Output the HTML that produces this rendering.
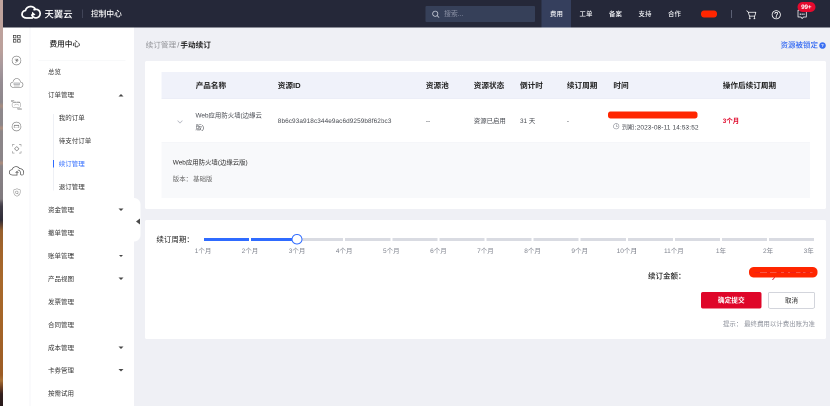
<!DOCTYPE html>
<html lang="zh-CN">
<head>
<meta charset="utf-8">
<title>续订管理 - 手动续订</title>
<style>
html,body{margin:0;padding:0;}
body{width:830px;height:406px;overflow:hidden;background:#eff0f5;font-family:"Liberation Sans","Noto Sans CJK SC",sans-serif;}
#root{position:absolute;left:0;top:0;width:1660px;height:812px;transform:scale(.5);transform-origin:0 0;will-change:transform;overflow:hidden;background:#eff0f5;color:#333;}
#root *{box-sizing:border-box;}
.abs{position:absolute;white-space:nowrap;}
/* desktop strip at far left */
#strip{left:0;top:0;width:5.7px;height:812px;background:linear-gradient(180deg,#c0a49d 0px,#bba09b 100px,#a6989c 135px,#958c92 165px,#8d878b 205px,#a88d80 212px,#8d878b 219px,#8c8689 250px,#b08f7e 256px,#8c8689 262px,#8a8488 320px,#ad8c7c 326px,#898387 332px,#807a7e 398px,#55505a 406px,#403c46 413px,#2f2c37 440px,#5f4232 450px,#96602e 461px,#a2642a 500px,#a8692b 560px,#a56528 640px,#9c5c25 750px,#a86f33 760px,#6e4022 775px,#33201f 788px,#271819 812px);}
/* header */
#hdr{left:7px;top:0;width:1653px;height:55px;background:#252839;z-index:5;}
#hdr .t{color:#fff;}
.tab{position:absolute;top:0;height:55px;line-height:56px;width:59px;text-align:center;color:#f4f5f8;font-size:12.8px;font-weight:500;}
.tab.on{background:#353f5d;}
/* icon bar */
#ibar{left:7px;top:53px;width:54px;height:759px;background:#fff;border-right:2px solid #f4f5f8;}
/* menu */
#menu{left:61px;top:53px;width:207px;height:759px;background:#fff;}
.mi{position:absolute;left:35px;height:30px;line-height:30px;font-size:13px;color:#333;white-space:nowrap;}
.mi.sub{left:56.4px;}
.mi.act{color:#2f6bff;}
.car{position:absolute;left:176.4px;margin-top:-1.2px;width:0;height:0;border-left:5.6px solid transparent;border-right:5.6px solid transparent;border-top:5px solid #474747;}
.car.up{border-top:none;border-bottom:5px solid #474747;}
/* cards */
.card{position:absolute;background:#fff;border-radius:3.5px;}
.th{position:absolute;top:0;height:54px;line-height:54px;font-size:15.25px;font-weight:700;color:#222;white-space:nowrap;}
.td{position:absolute;font-size:12.8px;color:#45484f;white-space:nowrap;line-height:24px;}
.lab{position:absolute;top:0;font-size:13px;color:#7e828d;white-space:nowrap;line-height:20px;transform:translateX(-50%);}
.sep{position:absolute;top:0;width:4px;height:6px;background:#fff;margin-left:-2px;}
</style>
</head>
<body>
<div id="root">

<div id="strip" class="abs"></div>
<div class="abs" style="left:5.700px;top:0;width:2px;height:55px;background:#252839"></div>
<div class="abs" style="left:5.700px;top:55px;width:2px;height:757px;background:#fff"></div>

<!-- ================= HEADER ================= -->
<div id="hdr" class="abs">
  <svg class="abs" style="left:0;top:0" width="100" height="53" viewBox="0 0 100 53" fill="none" stroke="#fff" stroke-width="3.5" stroke-linecap="round" stroke-linejoin="round">
    <path d="M57.5 36H46C41 36 37 32.800 37 28.500c0-4 3-7.200 7-7.500C45 16.200 49.300 13 54.200 13c4.300 0 7.800 2.200 9.600 5.600"/>
    <path d="M61.2 19.4A8.6 8.6 0 1 1 56.7 30.1" stroke-width="3.4"/>
    <path d="M57.800 24.500l-.8 6.400 6-1.600z" fill="#fff" stroke-width="1.2"/>
  </svg>
  <div class="abs t" style="left:82px;top:14.700px;line-height:28px;font-size:18.600px;font-weight:500;letter-spacing:.1px">天翼云</div>
  <div class="abs" style="left:157px;top:19px;width:1.4px;height:17px;background:#5b6074"></div>
  <div class="abs t" style="left:175px;top:14px;line-height:28px;font-size:15.4px;font-weight:500">控制中心</div>

  <div class="abs" style="left:843.6px;top:12px;width:219.4px;height:32px;border-radius:2px;background:#364059"></div>
  <svg class="abs" style="left:856px;top:20px" width="17" height="17" viewBox="0 0 17 17" fill="none" stroke="#c9cdd9" stroke-width="1.600" stroke-linecap="round"><circle cx="7.500" cy="7.500" r="5.200"/><path d="M11.500 11.500l3.300 3.300"/></svg>
  <div class="abs" style="left:881px;top:14px;line-height:28px;font-size:13.8px;color:#8d93a7">搜索...</div>

  <div class="tab on" style="left:1076.4px">费用</div>
  <div class="tab" style="left:1135.400px">工单</div>
  <div class="tab" style="left:1194.400px">备案</div>
  <div class="tab" style="left:1253.400px">支持</div>
  <div class="tab" style="left:1312.400px">合作</div>

  <div class="abs" style="left:1395.400px;top:21px;width:32px;height:14.400px;border-radius:6px;background:#ff2600"></div>
  <div class="abs" style="left:1455.400px;top:19.500px;width:1.400px;height:16px;background:#5b6074"></div>

  <!-- cart -->
  <svg class="abs" style="left:1485px;top:19px" width="22" height="20" viewBox="0 0 22 20" fill="none" stroke="#fff" stroke-width="1.450" stroke-linecap="round" stroke-linejoin="round">
    <path d="M1.500 2.500l3.200 3h15l-2.200 7.800H6.800L4.700 5.500"/><path d="M7.600 13.300v4.500M16.800 13.300v4.500M6.400 18.400h2.400M15.600 18.400h2.400"/>
  </svg>
  <!-- help -->
  <svg class="abs" style="left:1535.400px;top:18.700px" width="21" height="21" viewBox="0 0 21 21" fill="none" stroke="#fff" stroke-width="1.600" stroke-linecap="round" stroke-linejoin="round">
    <circle cx="10.500" cy="10.500" r="8.300"/><path d="M7.800 8.300c0-1.600 1.200-2.700 2.800-2.700s2.700 1 2.700 2.500c0 2-2.600 2.100-2.600 4.200"/><circle cx="10.600" cy="15" r=".6" fill="#fff"/>
  </svg>
  <!-- message -->
  <svg class="abs" style="left:1587px;top:19px" width="22" height="21" viewBox="0 0 22 21" fill="none" stroke="#fff" stroke-width="1.500" stroke-linejoin="round">
    <path d="M2 1.500h16.600v13.400h-5.600l-2.700 3.200-2.700-3.200H2z"/><circle cx="6.600" cy="9.300" r=".6" fill="#fff"/><circle cx="10.300" cy="9.300" r=".6" fill="#fff"/><circle cx="14" cy="9.300" r=".6" fill="#fff"/>
  </svg>
  <div class="abs" style="left:1587.600px;top:4.200px;width:36px;height:19.800px;border-radius:9.900px;background:#e60a2e;color:#fff;font-size:12.600px;font-weight:700;line-height:21.800px;text-align:center;letter-spacing:-.2px">99+</div>
</div>

<!-- ================= ICON BAR ================= -->
<div id="ibar" class="abs">
  <!-- local: x = C-7, y = C-53 -->
  <svg class="abs" style="left:19px;top:17px" width="16" height="16" viewBox="0 0 16 16" fill="none" stroke="#333" stroke-width="1.400"><rect x=".7" y=".7" width="5.200" height="5.200"/><rect x="9.100" y=".7" width="5.200" height="5.200"/><rect x=".7" y="9.100" width="5.200" height="5.200"/><rect x="9.100" y="9.100" width="5.200" height="5.200"/></svg>
  <svg class="abs" style="left:16px;top:58.400px" width="20" height="20" viewBox="0 0 20 20" fill="none" stroke="#6b6b6b" stroke-width="1.100" stroke-linecap="round" stroke-linejoin="round"><circle cx="10" cy="10" r="8.900"/><path d="M6.800 7.200h6.200l-4.600 3.200h5l-5.400 3.600"/></svg>
  <svg class="abs" style="left:12.600px;top:102.600px" width="27" height="20" viewBox="0 0 27 20" fill="none" stroke="#6b6b6b" stroke-width="1.100" stroke-linejoin="round"><path d="M7 19C3.500 19 1 16.600 1 13.600c0-2.700 2-4.900 4.800-5.300C6.500 4.200 9.600 1 13.500 1s7 3.200 7.700 7.300c2.800.4 4.800 2.600 4.800 5.300 0 3-2.500 5.400-6 5.400z"/><rect x="7.800" y="9.800" width="11.400" height="3.600" fill="#d4d6db" stroke="#9a9a9a" stroke-width=".9"/><path d="M7.800 16h11.400" stroke="#888"/></svg>
  <svg class="abs" style="left:13px;top:145px" width="28" height="24" viewBox="0 0 28 24" fill="none" stroke="#9a9a9a" stroke-width="1.100" stroke-linecap="round" stroke-linejoin="round"><rect x="4.200" y="6.400" width="17" height="10.600" rx="4"/><path d="M7.500 6.400h4M14 6.400h5.500" stroke="#555" stroke-width="1.350"/><path d="M9 12.500c2-3 6.500-3 8.500 0" stroke="#aaa"/><path d="M2.400 2.600h5.600M2.400 4.800h4" stroke="#777" stroke-width="1"/><path d="M14.400 19h8.600M15.400 21.200h8" stroke="#888" stroke-width="1"/></svg>
  <svg class="abs" style="left:16px;top:189.800px" width="20" height="20" viewBox="0 0 20 20" fill="none" stroke="#6b6b6b" stroke-width="1.100"><circle cx="10" cy="10" r="8.900"/><rect x="5.300" y="7.500" width="9.400" height="4.800" rx=".6" stroke-width="1"/><path d="M5.300 7.600h9.400" stroke-width="1.500"/></svg>
  <svg class="abs" style="left:16.600px;top:235px" width="19" height="19" viewBox="0 0 21 21" fill="none" stroke="#777" stroke-width="1.200" stroke-linecap="round" stroke-linejoin="round"><path d="M1 5V1h4M16 1h4v4M20 16v4h-4M5 20H1v-4" stroke="#8a8a8a"/><path d="M10.500 5.600l4.900 4.900-4.900 4.900-4.900-4.900z"/></svg>
  <svg class="abs" style="left:10px;top:279px" width="33" height="20" viewBox="0 0 33 22" preserveAspectRatio="none" fill="none" stroke="#333" stroke-width="1.250" stroke-linecap="round" stroke-linejoin="round"><path d="M17 20H8.500C4.500 20 1.500 17.300 1.500 14c0-3 2.300-5.300 5.300-5.700C8 4.500 11 1.500 15 1.500c3.300 0 6 1.800 7.300 4.500"/><path d="M22.500 6c4.500-.5 8 3.500 8 8.500 0 3-1.500 5.500-3.500 5.500s-3.300-2.500-3.300-5.500S22 8.500 19 9"/><path d="M17 20v-7.500M14.500 14.500l2.500-2.500 2.500 2.500"/></svg>
  <svg class="abs" style="left:19px;top:322.600px" width="16" height="18" viewBox="0 0 20 22" fill="none" stroke="#8c8c8c" stroke-width="1.300" stroke-linejoin="round"><path d="M10 1.500l8 3v6c0 5-3.500 8.500-8 10-4.500-1.500-8-5-8-10v-6z"/><circle cx="9.500" cy="10.500" r="3.200"/><path d="M11.500 13l2 3"/></svg>
</div>

<!-- ================= MENU ================= -->
<div id="menu" class="abs">
  <!-- local: x = C-59.6, y = C-53 -->
  <div class="abs" style="left:38px;top:19.800px;line-height:30px;font-size:15.300px;font-weight:500;color:#1a1a1a">费用中心</div>
  <div class="abs" style="left:16px;top:66.500px;width:174px;height:1.500px;background:#f1f2f5"></div>

  <div class="mi" style="top:76.00px">总览</div>
  <div class="mi" style="top:121.96px">订单管理</div><i class="car up" style="top:136.60px"></i>
  <div class="mi sub" style="top:167.92px">我的订单</div>
  <div class="mi sub" style="top:213.88px">待支付订单</div>
  <div class="mi sub act" style="top:259.84px">续订管理</div>
  <div class="mi sub" style="top:305.80px">退订管理</div>
  <div class="mi" style="top:351.76px">资金管理</div><i class="car" style="top:364.96px"></i>
  <div class="mi" style="top:397.72px">撤单管理</div>
  <div class="mi" style="top:443.68px">账单管理</div><i class="car" style="top:456.88px"></i>
  <div class="mi" style="top:489.64px">产品视图</div><i class="car" style="top:502.84px"></i>
  <div class="mi" style="top:535.60px">发票管理</div>
  <div class="mi" style="top:581.56px">合同管理</div>
  <div class="mi" style="top:627.52px">成本管理</div><i class="car" style="top:640.72px"></i>
  <div class="mi" style="top:673.48px">卡券管理</div><i class="car" style="top:686.68px"></i>
  <div class="mi" style="top:719.44px">按需试用</div>

  <div class="abs" style="left:46px;top:175px;width:1.300px;height:153px;background:#dde0ea"></div>
  <div class="abs" style="left:44.800px;top:267.200px;width:2.400px;height:14.500px;background:#2f6bff"></div>
</div>

<!-- collapse tab -->
<div class="abs" style="left:267.600px;top:396px;width:13.800px;height:87.400px;background:#fff;border-radius:0 13px 13px 0"></div>
<div class="abs" style="left:272.400px;top:436.500px;width:0;height:0;border-top:6.500px solid transparent;border-bottom:6.500px solid transparent;border-right:8px solid #4a4a4a"></div>

<!-- ================= BREADCRUMB ================= -->
<div class="abs" style="left:291.200px;top:76.400px;line-height:28px;font-size:15.250px;color:#929398">续订管理<span style="margin:0 2px 0 2.400px;color:#7d7e83">/</span><b style="color:#1f1f1f;font-weight:700">手动续订</b></div>
<div class="abs" style="left:1561px;top:76.400px;line-height:28px;font-size:15px;color:#2f66f2;font-weight:500">资源被锁定</div>
<svg class="abs" style="left:1637.600px;top:83.600px" width="14" height="14" viewBox="0 0 14 14"><circle cx="7" cy="7" r="6.600" fill="#3a6ff2"/><text x="7" y="10.400" text-anchor="middle" font-family="Liberation Sans, sans-serif" font-size="8.800" font-weight="700" fill="#fff">?</text></svg>

<!-- ================= CARD 1 : TABLE ================= -->
<div class="card" style="left:290.400px;top:122px;width:1362px;height:295.600px">
  <!-- local: x = C-290.4, y = C-122 -->
  <div class="abs" style="left:32.600px;top:22px;width:1296.600px;height:53.600px;background:#f0f2fa;border-bottom:1px solid #e7eaf4">
    <!-- local x = C-323 -->
    <div class="th" style="left:68.400px">产品名称</div>
    <div class="th" style="left:232.600px">资源ID</div>
    <div class="th" style="left:528.800px">资源池</div>
    <div class="th" style="left:624.600px">资源状态</div>
    <div class="th" style="left:717px">倒计时</div>
    <div class="th" style="left:810.800px">续订周期</div>
    <div class="th" style="left:903.800px">时间</div>
    <div class="th" style="left:1122.600px">操作后续订周期</div>
  </div>
  <!-- row (C y 197.6 - 283.8) local y 75.6 - 161.8 -->
  <div class="abs" style="left:32.600px;top:162.6px;width:1296.600px;height:1.500px;background:#ebedf3"></div>
  <svg class="abs" style="left:64px;top:118.0px" width="12" height="8" viewBox="0 0 12 8" fill="none" stroke="#a9adb8" stroke-width="1.300" stroke-linecap="round" stroke-linejoin="round"><path d="M1.500 1.500l4.500 4.500 4.500-4.500"/></svg>
  <div class="td" style="left:100.600px;top:96.6px;line-height:24.200px">Web应用防火墙(边缘云<br>版)</div>
  <div class="td" style="left:265.200px;top:108.2px;letter-spacing:.19px">8b6c93a918c344e9ac6d9259b8f62bc3</div>
  <div class="td" style="left:561.400px;top:108.2px">--</div>
  <div class="td" style="left:657.200px;top:108.2px">资源已启用</div>
  <div class="td" style="left:749.600px;top:108.2px">31 天</div>
  <div class="td" style="left:843.400px;top:108.2px">-</div>
  <div class="abs" style="left:925.400px;top:100.6px;width:179.200px;height:14.400px;border-radius:5px;background:#ff2600"></div>
  <svg class="abs" style="left:935.800px;top:124.400px" width="13" height="13" viewBox="0 0 12 12" fill="none" stroke="#7d818b" stroke-width="1" stroke-linecap="round"><circle cx="6" cy="6" r="5"/><path d="M6 3v3.200h2.400"/></svg>
  <div class="td" style="left:953px;top:121.400px;font-size:13.150px;letter-spacing:.16px"><span style="font-size:12.300px">到期</span><span style="margin:0 .3px 0 .8px">:</span>2023<b>-</b>08<b>-</b>11 14:53:52</div>
  <div class="td" style="left:1155.200px;top:108.2px;color:#df0629;font-weight:700">3个月</div>

  <!-- expanded row local y 162 - 272.4 -->
  <div class="abs" style="left:32.600px;top:164.1px;width:1296.600px;height:110px;background:#f8f9fb"></div>
  <div class="td" style="left:55.200px;top:190.5px;color:#2b2b2b">Web应用防火墙(边缘云版)</div>
  <div class="td" style="left:55.200px;top:224.4px;color:#666">版本：<span style="margin-left:2.4px">基础版</span></div>
</div>

<!-- ================= CARD 2 : SLIDER ================= -->
<div class="card" style="left:290.400px;top:440px;width:1362px;height:237.800px">
  <!-- local: x = C-290.4, y = C-440.4 -->
  <div class="abs" style="left:22.400px;top:24.600px;line-height:28px;font-size:15px;font-weight:400;color:#222">续订周期：</div>
  <!-- track C x 408.2 - 1627.6 => local 117.8 - 1237.2 ; y C 476-482 => local 35.6 -->
  <div class="abs" style="left:117.800px;top:35.900px;width:1219.400px;height:6px;background:#d9dbe2">
    <div class="abs" style="left:0;top:0;width:186.0px;height:6px;background:#2f6bff"></div>
    <i class="sep" style="left:91.8px"></i><i class="sep" style="left:186.0px"></i><i class="sep" style="left:280.2px"></i><i class="sep" style="left:374.4px"></i><i class="sep" style="left:468.6px"></i><i class="sep" style="left:562.8px"></i><i class="sep" style="left:657.0px"></i><i class="sep" style="left:751.2px"></i><i class="sep" style="left:845.4px"></i><i class="sep" style="left:939.6px"></i><i class="sep" style="left:1033.8px"></i><i class="sep" style="left:1128.0px"></i>
  </div>
  <div class="abs" style="left:293.0px;top:27.900px;width:21.600px;height:21.600px;border-radius:50%;background:#fff;border:2.200px solid #2f6bff"></div>
  <div class="abs" style="left:117.800px;top:52px;width:1219.400px;height:20px">
    <span class="lab" style="left:-2px">1个月</span>
    <span class="lab" style="left:91.8px">2个月</span>
    <span class="lab" style="left:186.0px">3个月</span>
    <span class="lab" style="left:280.2px">4个月</span>
    <span class="lab" style="left:374.4px">5个月</span>
    <span class="lab" style="left:468.6px">6个月</span>
    <span class="lab" style="left:562.8px">7个月</span>
    <span class="lab" style="left:657.0px">8个月</span>
    <span class="lab" style="left:751.2px">9个月</span>
    <span class="lab" style="left:845.4px">10个月</span>
    <span class="lab" style="left:939.6px">11个月</span>
    <span class="lab" style="left:1033.8px">1年</span>
    <span class="lab" style="left:1128.0px">2年</span>
    <span class="lab" style="left:auto;right:0;transform:none">3年</span>
  </div>

  <div class="abs" style="left:1005.600px;top:97.600px;line-height:28px;font-size:15px;font-weight:500;color:#1f1f1f">续订金额：</div>
  <!-- price redaction C x 1498-1635, y 535-555.6 => local 1207.6, 94.6 -->
  <div class="abs" style="left:1208px;top:94px;width:136.400px;height:21.400px;border-radius:9px;background:#ff2600"></div>
  <div class="abs" style="left:1218.3px;top:103.800px;width:117.8px;height:1.600px;background:rgba(215,20,60,.75)"></div>
  <div class="abs" style="left:1229.6px;top:103.700px;width:14.3px;height:1.800px;background:rgba(255,200,190,.62)"></div>
  <div class="abs" style="left:1250.1px;top:103.700px;width:12.3px;height:1.800px;background:rgba(255,200,190,.62)"></div>
  <div class="abs" style="left:1271.6px;top:103.700px;width:6.1px;height:1.800px;background:rgba(255,200,190,.62)"></div>
  <div class="abs" style="left:1285.9px;top:103.700px;width:4.1px;height:1.800px;background:rgba(255,200,190,.62)"></div>
  <div class="abs" style="left:1301.3px;top:103.700px;width:9.2px;height:1.800px;background:rgba(255,200,190,.62)"></div>
  <div class="abs" style="left:1315.6px;top:103.700px;width:5.1px;height:1.800px;background:rgba(255,200,190,.62)"></div>
  <div class="abs" style="left:1330.0px;top:103.700px;width:5.1px;height:1.800px;background:rgba(255,200,190,.62)"></div>
  <div class="abs" style="left:1255.6px;top:114.600px;width:2px;height:5px;background:#d8143c;transform:skewX(-40deg)"></div>

  <div class="abs" style="left:1112px;top:143.600px;width:120.400px;height:33px;border-radius:4px;background:#df0629;color:#fff;font-size:13.400px;font-weight:700;line-height:34px;text-align:center">确定提交</div>
  <div class="abs" style="left:1245.800px;top:143.600px;width:93.400px;height:33px;border-radius:4px;background:#fff;border:1.400px solid #a6abb8;color:#222;font-size:13px;line-height:31px;text-align:center">取消</div>
  <div class="abs" style="right:22.400px;top:194.400px;line-height:28px;font-size:12.900px;color:#8c909a">提示： 最终费用以计费出账为准</div>
</div>

</div>
</body>
</html>
